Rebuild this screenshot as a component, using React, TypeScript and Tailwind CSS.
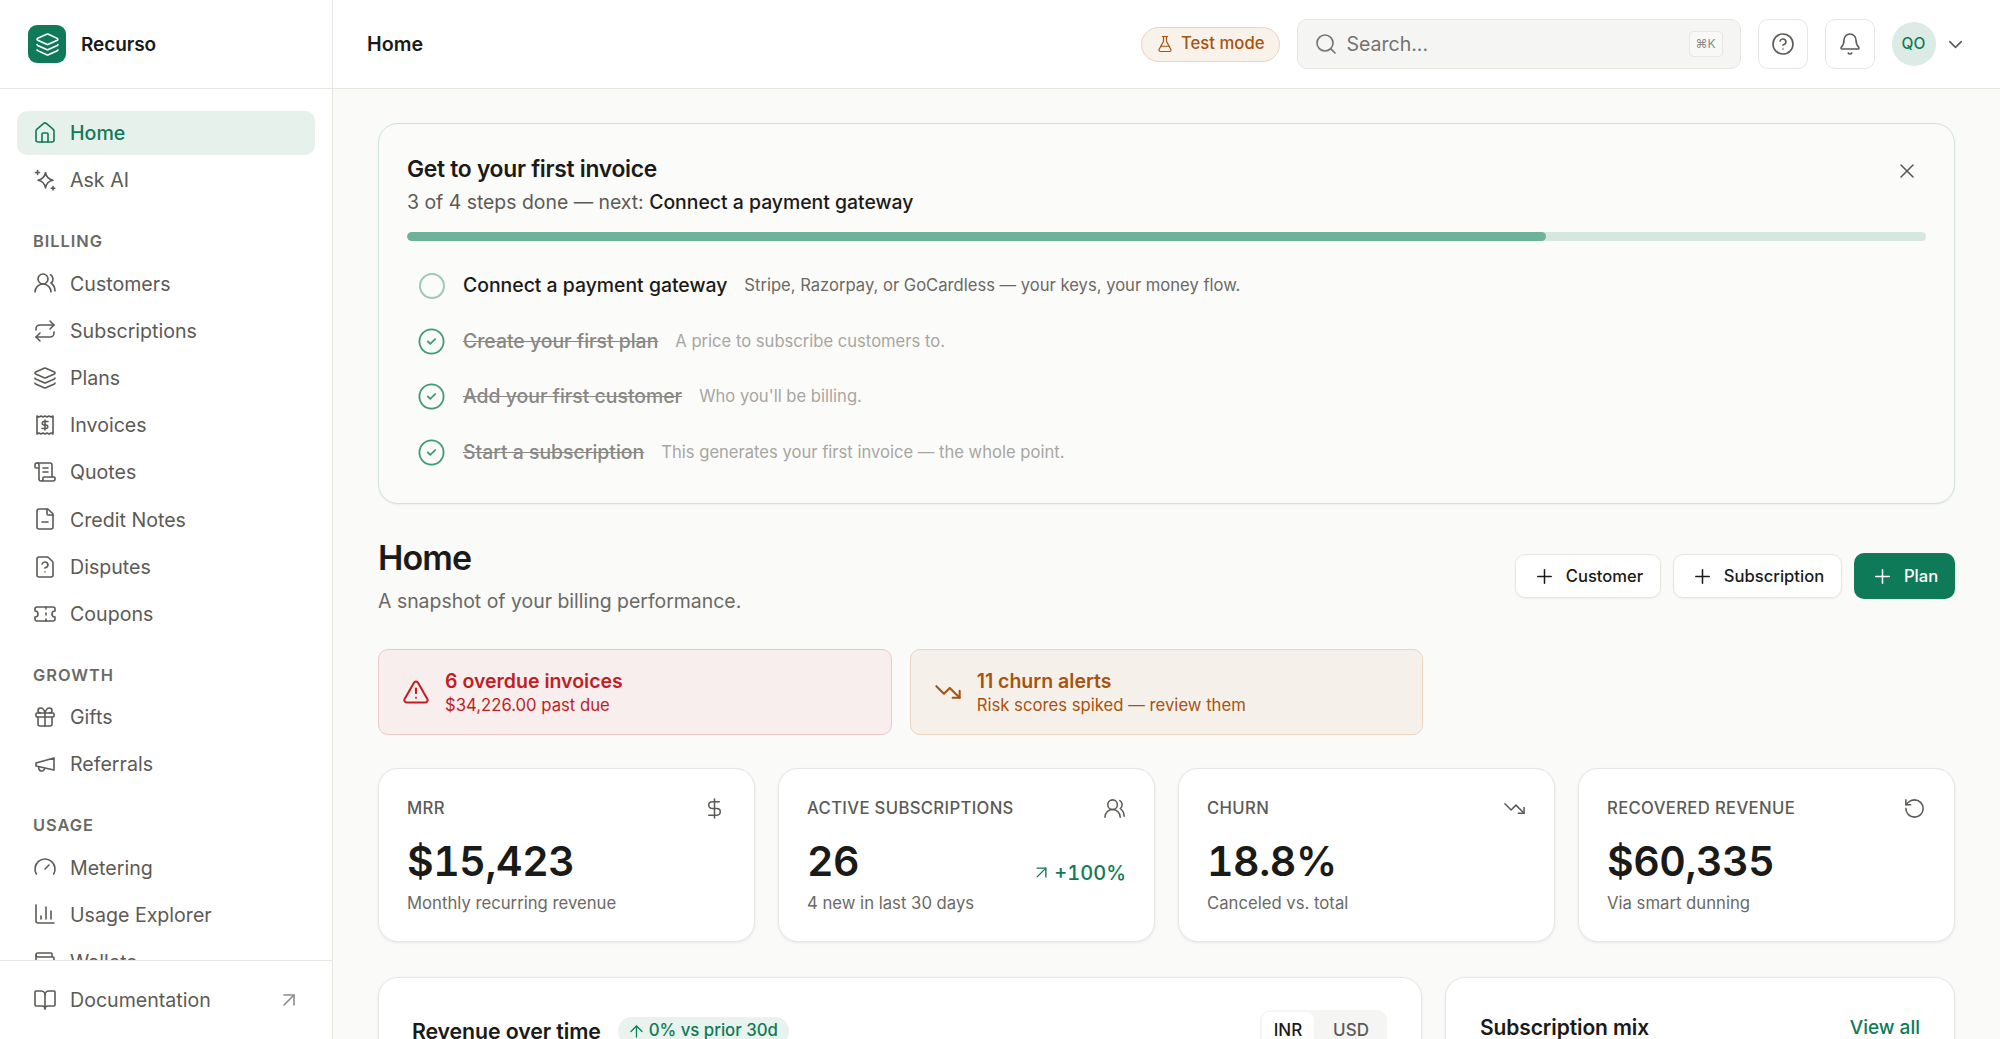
import {
  ArrowUp, ArrowUpRight, Bell, BookOpen, ChartColumn, ChevronDown, CircleCheck, CircleHelp, DollarSign,
  FileMinus, FileQuestionMark, FlaskConical, Gauge, Gift, House, Layers, Plus,
  Repeat, RotateCcw, ScrollText, Search, Ticket, TrendingDown, TriangleAlert, UsersRound, Wallet, X,
} from 'lucide-react'
import type { ComponentType } from 'react'

type IconProps = { size?: number; strokeWidth?: number; className?: string }
type NavItem = { label: string; icon: ComponentType<IconProps>; active?: boolean }

function SparkIcon({ size = 24, strokeWidth = 1.75 }: IconProps) {
  return (
    <svg width={size} height={size} viewBox="0 0 24 24" fill="none" stroke="currentColor" strokeWidth={strokeWidth} strokeLinecap="round" strokeLinejoin="round">
      <path d="M12.500 4.500c.8 4.700 3 6.900 7.500 7.700-4.500.8-6.700 3-7.500 7.700-.8-4.700-3-6.900-7.500-7.700 4.500-.8 6.700-3 7.500-7.700Z" />
      <path d="M4.500 2.500v4M2.500 4.500h4M20 18.500v3.500M18.200 20.200h3.600" />
    </svg>
  )
}

function ReceiptDollarIcon({ size = 24, strokeWidth = 1.75 }: IconProps) {
  return (
    <svg width={size} height={size} viewBox="0 0 24 24" fill="none" stroke="currentColor" strokeWidth={strokeWidth} strokeLinecap="round" strokeLinejoin="round">
      <path d="M4 3l2 1 2-1 2 1 2-1 2 1 2-1 2 1 2-1v18l-2-1-2 1-2-1-2 1-2-1-2 1-2-1-2 1Z" />
      <path d="M15 8.500h-4a1.750 1.750 0 0 0 0 3.500h2a1.750 1.750 0 0 1 0 3.500H9M12 7v10" />
    </svg>
  )
}

function MegaphoneIcon({ size = 24, strokeWidth = 1.75 }: IconProps) {
  return (
    <svg width={size} height={size} viewBox="0 0 24 24" fill="none" stroke="currentColor" strokeWidth={strokeWidth} strokeLinecap="round" strokeLinejoin="round">
      <path d="m3 11 18-5v12L3 14v-3z" />
      <path d="M11.600 16.800a3 3 0 1 1-5.800-1.600" />
    </svg>
  )
}

const TOP_NAV: NavItem[] = [
  { label: 'Home', icon: House, active: true },
  { label: 'Ask AI', icon: SparkIcon },
]

const NAV_GROUPS: { title: string; items: NavItem[] }[] = [
  {
    title: 'BILLING',
    items: [
      { label: 'Customers', icon: UsersRound },
      { label: 'Subscriptions', icon: Repeat },
      { label: 'Plans', icon: Layers },
      { label: 'Invoices', icon: ReceiptDollarIcon },
      { label: 'Quotes', icon: ScrollText },
      { label: 'Credit Notes', icon: FileMinus },
      { label: 'Disputes', icon: FileQuestionMark },
      { label: 'Coupons', icon: Ticket },
    ],
  },
  {
    title: 'GROWTH',
    items: [
      { label: 'Gifts', icon: Gift },
      { label: 'Referrals', icon: MegaphoneIcon },
    ],
  },
  {
    title: 'USAGE',
    items: [
      { label: 'Metering', icon: Gauge },
      { label: 'Usage Explorer', icon: ChartColumn },
      { label: 'Wallets', icon: Wallet },
    ],
  },
]

const STEPS = [
  { title: 'Connect a payment gateway', hint: 'Stripe, Razorpay, or GoCardless — your keys, your money flow.', done: false },
  { title: 'Create your first plan', hint: 'A price to subscribe customers to.', done: true },
  { title: 'Add your first customer', hint: "Who you'll be billing.", done: true },
  { title: 'Start a subscription', hint: 'This generates your first invoice — the whole point.', done: true },
]

const STATS = [
  { label: 'MRR', value: '$15,423', sub: 'Monthly recurring revenue', icon: DollarSign },
  { label: 'ACTIVE SUBSCRIPTIONS', value: '26', sub: '4 new in last 30 days', icon: UsersRound, delta: '+100%' },
  { label: 'CHURN', value: '18.8%', sub: 'Canceled vs. total', icon: TrendingDown },
  { label: 'RECOVERED REVENUE', value: '$60,335', sub: 'Via smart dunning', icon: RotateCcw },
]

function NavRow({ item }: { item: NavItem }) {
  const Icon = item.icon
  return (
    <a
      className={
        item.active
          ? 'mb-[3.2px] flex h-[44px] shrink-0 items-center gap-[13px] rounded-[10px] bg-[#e6f1ec] pl-[16px] text-[19.6px] font-medium text-[#0f7a58]'
          : 'mb-[3.2px] flex h-[44px] shrink-0 items-center gap-[13px] rounded-[10px] pl-[16px] text-[19.6px] text-[#5c5a56]'
      }
    >
      <Icon size={24} strokeWidth={1.6} />
      <span className="pt-[2px]">{item.label}</span>
    </a>
  )
}

function Sidebar() {
  return (
    <aside className="flex h-full w-[333px] shrink-0 flex-col border-r border-[#e7e6e2] bg-white">
      <div className="flex h-[89px] shrink-0 items-center gap-[15px] border-b border-[#e7e6e2] pl-[28px]">
        <div className="flex h-[38px] w-[38px] items-center justify-center rounded-[9px] bg-[#0f7a58] text-white">
          <Layers size={25} strokeWidth={1.5} />
        </div>
        <span className="pt-[2px] text-[19px] font-semibold tracking-[-0.005em] text-[#1a1a18]">Recurso</span>
      </div>
      <nav className="flex min-h-0 flex-1 flex-col overflow-hidden px-[17px] pt-[22px]">
        {TOP_NAV.map((item) => (
          <NavRow key={item.label} item={item} />
        ))}
        {NAV_GROUPS.map((group) => (
          <div key={group.title} className="flex shrink-0 flex-col">
            <div className="mt-[24px] mb-[7px] h-[25px] pl-[16px] text-[16.4px] leading-[25px] font-semibold tracking-[0.06em] text-[#6b6965]">
              {group.title}
            </div>
            {group.items.map((item) => (
              <NavRow key={item.label} item={item} />
            ))}
          </div>
        ))}
      </nav>
      <div className="flex h-[79px] shrink-0 items-center gap-[13px] border-t border-[#e7e6e2] pl-[33px] pr-[31px] text-[19.6px] text-[#5c5a56]">
        <BookOpen size={24} strokeWidth={1.6} />
        <span className="flex-1 pt-[2px]">Documentation</span>
        <ArrowUpRight size={24} className="text-[#8d8b86]" strokeWidth={1.6} />
      </div>
    </aside>
  )
}

function Topbar() {
  return (
    <header className="flex h-[89px] shrink-0 items-center border-b border-[#e7e6e2] bg-white pl-[34px] pr-[33.5px]">
      <h2 className="flex-1 pt-[2px] text-[19.7px] font-semibold text-[#1a1a18]">Home</h2>
      <div className="flex h-[35px] items-center gap-[7px] rounded-full border border-[#ecd3bd] bg-[#f9f2ea] pl-[14px] pr-[14px] text-[16.7px] font-medium text-[#a8520f]">
        <FlaskConical size={18} strokeWidth={1.6} />
        Test mode
      </div>
      <div className="ml-[17px] flex h-[50px] w-[444px] items-center gap-[9px] rounded-[10px] border border-[#e7e6e2] bg-[#f5f5f3] pl-[16px] pr-[17px] text-[19.5px] text-[#74726e]">
        <Search size={24} strokeWidth={1.6} />
        <span className="flex-1 pt-[2px]">Search...</span>
        <span className="flex h-[26px] w-[34px] items-center justify-center rounded-[5px] border border-[#e7e6e2] bg-[#f8f8f6] text-[12px] text-[#8d8b86]">⌘K</span>
      </div>
      <button className="ml-[17px] flex h-[50px] w-[50px] items-center justify-center rounded-[10px] border border-[#e7e6e2] bg-white text-[#5c5a56]">
        <CircleHelp size={24} strokeWidth={1.6} />
      </button>
      <button className="ml-[17px] flex h-[50px] w-[50px] items-center justify-center rounded-[10px] border border-[#e7e6e2] bg-white text-[#5c5a56]">
        <Bell size={24} strokeWidth={1.6} />
      </button>
      <div className="ml-[17px] flex h-[44px] w-[44px] items-center justify-center rounded-full bg-[#dcebe5] text-[15.5px] font-medium text-[#0f7a58]">QO</div>
      <ChevronDown size={23} className="ml-[8px] text-[#5c5a56]" strokeWidth={1.6} />
    </header>
  )
}

function SetupBanner() {
  return (
    <section className="relative rounded-[20px] border border-[#cfe3da] bg-[#fbfbf9] px-[28px] pt-[29px] pb-[23px] shadow-[0_1px_2px_rgba(0,0,0,0.05)]">
      <h3 className="text-[22.8px] leading-[32px] font-semibold tracking-[-0.012em] text-[#1a1a18]">Get to your first invoice</h3>
      <p className="mt-[3px] text-[19.4px] leading-[28px] text-[#5c5a56]">
        3 of 4 steps done — next: <span className="font-medium text-[#1a1a18]">Connect a payment gateway</span>
      </p>
      <div className="mt-[16px] h-[9px] overflow-hidden rounded-full bg-[#d5e7df]">
        <div className="h-full w-3/4 rounded-full bg-[#6fb29b]" />
      </div>
      <ul className="mt-[17px]">
        {STEPS.map((step) => (
          <li key={step.title} className="flex h-[55.5px] items-center pl-[10px]">
            {step.done ? (
              <CircleCheck size={29} strokeWidth={1.5} className="text-[#3f9a7c]" />
            ) : (
              <span className="mx-[1.5px] h-[26px] w-[26px] rounded-full border-2 border-[#9cc9b8]" />
            )}
            <span
              className={
                step.done
                  ? 'ml-[17px] text-[19.4px] font-medium text-[#8a8884] line-through'
                  : 'ml-[17px] text-[19.4px] font-medium text-[#1a1a18]'
              }
            >
              {step.title}
            </span>
            <span className={step.done ? 'ml-[17px] text-[16.6px] text-[#a8a6a2]' : 'ml-[17px] text-[16.6px] text-[#6b6965]'}>{step.hint}</span>
          </li>
        ))}
      </ul>
      <button className="absolute top-[35px] right-[35px] text-[#5c5a56]">
        <X size={24} strokeWidth={1.6} />
      </button>
    </section>
  )
}

function PageHead() {
  return (
    <div className="mt-[33px] flex items-start justify-between">
      <div>
        <h1 className="text-[34px] leading-[42px] font-semibold tracking-[-0.025em] text-[#1a1a18]">Home</h1>
        <p className="mt-[8px] text-[19.45px] leading-[28px] text-[#6b6965]">A snapshot of your billing performance.</p>
      </div>
      <div className="mt-[16px] flex items-center gap-[12px]">
        <button className="flex h-[44px] w-[146px] items-center justify-center gap-[10px] rounded-[10px] border border-[#e7e6e2] bg-white text-[16.6px] font-medium text-[#1a1a18] shadow-[0_1px_2px_rgba(0,0,0,0.05)]">
          <Plus size={23} strokeWidth={1.6} />
          Customer
        </button>
        <button className="flex h-[44px] w-[169px] items-center justify-center gap-[10px] rounded-[10px] border border-[#e7e6e2] bg-white text-[16.6px] font-medium text-[#1a1a18] shadow-[0_1px_2px_rgba(0,0,0,0.05)]">
          <Plus size={23} strokeWidth={1.6} />
          Subscription
        </button>
        <button className="flex h-[46px] w-[101px] items-center justify-center gap-[10px] rounded-[10px] bg-[#0f7a58] text-[16.6px] font-medium text-white">
          <Plus size={23} strokeWidth={1.6} />
          Plan
        </button>
      </div>
    </div>
  )
}

function Alerts() {
  return (
    <div className="mt-[34px] grid grid-cols-3 gap-[18px]">
      <div className="flex h-[86px] items-center gap-[15px] rounded-[10px] border border-[#ecc9c8] bg-[#f8eeed] pl-[23px]">
        <TriangleAlert size={28} strokeWidth={1.75} className="text-[#bf1f24]" />
        <div>
          <div className="text-[19.5px] leading-[25px] font-semibold text-[#bf1f24]">6 overdue invoices</div>
          <div className="text-[16.7px] leading-[22px] text-[#bf1f24]">$34,226.00 past due</div>
        </div>
      </div>
      <div className="flex h-[86px] items-center gap-[15px] rounded-[10px] border border-[#ecd3bd] bg-[#f5f1ea] pl-[23px]">
        <TrendingDown size={28} strokeWidth={1.75} className="text-[#a8520f]" />
        <div>
          <div className="text-[19.5px] leading-[25px] font-semibold text-[#a8520f]">11 churn alerts</div>
          <div className="text-[16.7px] leading-[22px] text-[#a8520f]">Risk scores spiked — review them</div>
        </div>
      </div>
    </div>
  )
}

function StatCards() {
  return (
    <div className="mt-[33px] grid grid-cols-4 gap-[23px]">
      {STATS.map((stat) => {
        const Icon = stat.icon
        return (
          <div key={stat.label} className="h-[174px] rounded-[20px] border border-[#e7e6e2] bg-white px-[28px] pt-[27px] shadow-[0_1px_3px_rgba(0,0,0,0.07)]">
            <div className="flex h-[24px] items-center justify-between text-[#5c5a56]">
              <span className="pt-[2px] text-[16.7px] font-medium tracking-[0.02em]">{stat.label}</span>
              <Icon size={23} strokeWidth={1.6} />
            </div>
            <div className="mt-[11px] flex h-[60px] items-center justify-between">
              <span className="text-[41px] leading-[60px] font-semibold tracking-[-0.01em] text-[#1a1a18] tabular-nums">{stat.value}</span>
              {stat.delta && (
                <span className="mt-[23px] flex items-center gap-[2px] text-[20px] font-medium text-[#0f7a58] tabular-nums">
                  <ArrowUpRight size={21} strokeWidth={1.6} />
                  {stat.delta}
                </span>
              )}
            </div>
            <div className="text-[16.7px] leading-[24px] text-[#6b6965]">{stat.sub}</div>
          </div>
        )
      })}
    </div>
  )
}

function ChartCards() {
  return (
    <div className="mt-[35px] grid grid-cols-[1fr_510px] gap-[23px]">
      <div className="h-[400px] rounded-[20px] border border-[#e7e6e2] bg-white pr-[34px] pl-[33px] pt-[32px] shadow-[0_1px_3px_rgba(0,0,0,0.07)]">
        <div className="flex items-center justify-between">
          <div className="flex items-center gap-[17px]">
            <h3 className="text-[21.3px] leading-[36px] font-semibold tracking-[-0.005em] text-[#1a1a18]">Revenue over time</h3>
            <span className="flex h-[28px] items-center gap-[3px] rounded-full bg-[#e8f3ee] pl-[9px] pr-[11px] text-[16.8px] font-medium text-[#0f7a58]">
              <ArrowUp size={19} strokeWidth={1.6} />
              0% vs prior 30d
            </span>
          </div>
          <div className="flex h-[42px] w-[127px] rounded-[10px] bg-[#f5f5f3] p-[2px] text-[17px] font-medium text-[#5c5a56]">
            <span className="flex w-[52px] items-center justify-center rounded-[8px] bg-white text-[#1a1a18]">INR</span>
            <span className="flex flex-1 items-center justify-center pl-[3px]">USD</span>
          </div>
        </div>
      </div>
      <div className="h-[400px] rounded-[20px] border border-[#e7e6e2] bg-white px-[34px] pt-[32px] shadow-[0_1px_3px_rgba(0,0,0,0.07)]">
        <div className="flex items-center justify-between">
          <h3 className="text-[21px] leading-[36px] font-semibold tracking-[-0.005em] text-[#1a1a18]">Subscription mix</h3>
          <a className="text-[19px] font-medium text-[#0f7a58]">View all</a>
        </div>
      </div>
    </div>
  )
}

export default function App() {
  return (
    <div className="flex h-screen w-full overflow-hidden bg-[#fafaf8] font-['Inter',sans-serif]">
      <Sidebar />
      <div className="flex min-w-0 flex-1 flex-col overflow-hidden">
        <Topbar />
        <main className="min-h-0 flex-1 overflow-hidden px-[45px] pt-[34px]">
          <SetupBanner />
          <PageHead />
          <Alerts />
          <StatCards />
          <ChartCards />
        </main>
      </div>
    </div>
  )
}
